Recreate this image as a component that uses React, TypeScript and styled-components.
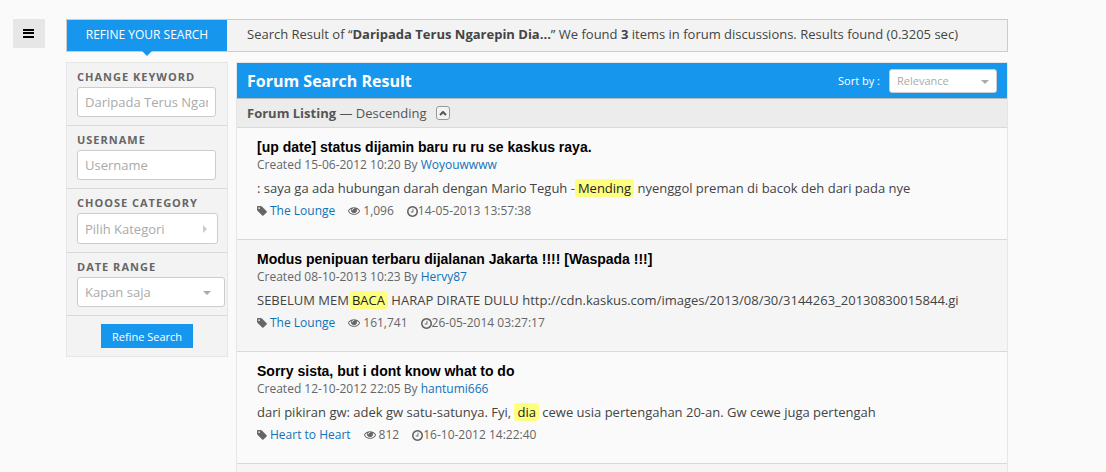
import React from 'react';
import styled, { createGlobalStyle, css } from 'styled-components';

const sans = '"Open Sans", "Noto Sans", sans-serif';
const blue = '#1796ee';
const line = '#d9d9d9';

const GlobalStyle = createGlobalStyle`
  *, *::before, *::after { box-sizing: border-box; }
  body {
    margin: 0;
    background: #fafafa;
    color: #444;
    font: 13px/18px ${sans};
  }
  button, input, select { font-family: inherit; }
`;

const Page = styled.div`
  display: flex;
  align-items: flex-start;
  gap: 21px;
  padding: 19px 98px 0 13px;
`;

const MenuButton = styled.button`
  flex: none;
  display: flex;
  align-items: center;
  justify-content: center;
  width: 32px;
  height: 29px;
  padding: 0;
  border: 0;
  background: #e6e6e6;
  color: #000;
  cursor: pointer;
`;

const Content = styled.div`
  flex: 1;
  min-width: 0;
`;

const SummaryBar = styled.div`
  display: flex;
  min-height: 33px;
  border: 1px solid #ccc;
  background: #f3f3f3;
`;

const RefineTab = styled.h2`
  position: relative;
  flex: none;
  width: 160px;
  margin: 0;
  background: ${blue};
  color: #fff;
  font-size: 12px;
  font-weight: 400;
  line-height: 30px;
  text-align: center;
  text-transform: uppercase;

  &::after {
    content: '';
    position: absolute;
    top: 100%;
    left: 50%;
    margin-left: -5px;
    border: 5px solid transparent;
    border-top-color: ${blue};
    border-bottom: 0;
  }
`;

const SummaryText = styled.p`
  margin: 0;
  padding: 5px 20px;
`;

const Columns = styled.div`
  display: flex;
  align-items: flex-start;
  gap: 8px;
  margin-top: 10px;
`;

const Sidebar = styled.form`
  flex: none;
  width: 162px;
  border: 1px solid #e6e6e6;
  background: #f3f3f3;
`;

const Field = styled.div`
  display: flex;
  flex-direction: column;
  align-items: flex-start;
  gap: 2px;
  padding: 6px 0 8px 10px;
  border-bottom: 1px solid ${line};
`;

const FieldLabel = styled.label`
  color: #666;
  font-size: 11px;
  font-weight: 700;
  line-height: 16px;
  letter-spacing: 1px;
  text-transform: uppercase;
`;

const control = css`
  border: 1px solid #ccc;
  border-radius: 3px;
  background: #fff;
  color: #aaa;
  font-size: 13px;
  padding: 0 7px;
`;

const TextInput = styled.input`
  ${control}
  width: 139px;
  height: 30px;
  &::placeholder { color: #aaa; opacity: 1; }
`;

const MenuTrigger = styled.button`
  ${control}
  display: flex;
  align-items: center;
  justify-content: space-between;
  width: 141px;
  height: 31px;
  padding-right: 10px;
  cursor: pointer;
`;

const SelectBox = styled.div<{ $compact?: boolean }>`
  position: relative;
  width: ${(p) => (p.$compact ? 108 : 148)}px;

  svg {
    position: absolute;
    top: 50%;
    right: ${(p) => (p.$compact ? 8 : 14)}px;
    margin-top: -1px;
    pointer-events: none;
  }
`;

const Select = styled.select<{ $compact?: boolean }>`
  ${control}
  display: block;
  appearance: none;
  width: 100%;
  height: ${(p) => (p.$compact ? 24 : 30)}px;
  font-size: ${(p) => (p.$compact ? 11 : 13)}px;
`;

const SidebarFooter = styled.div`
  display: flex;
  justify-content: center;
  padding: 8px 0;
`;

const SubmitButton = styled.button`
  width: 92px;
  height: 24px;
  padding: 0;
  border: 0;
  background: ${blue};
  color: #fff;
  font-size: 11px;
  cursor: pointer;
`;

const Results = styled.main`
  flex: 1;
  min-width: 0;
  border: 1px solid #e6e6e6;
`;

const ResultsHeader = styled.header`
  display: flex;
  align-items: center;
  justify-content: space-between;
  min-height: 36px;
  padding: 0 10px;
  border-bottom: 1px solid #bbb;
  background: ${blue};
  color: #fff;
`;

const ResultsTitle = styled.h1`
  margin: 0;
  font-size: 16px;
  line-height: 22px;
`;

const SortControl = styled.div`
  display: flex;
  align-items: center;
  gap: 9px;
  font-size: 11px;
`;

const ListingBar = styled.div`
  display: flex;
  align-items: center;
  gap: 9px;
  min-height: 29px;
  padding: 0 10px;
  border-bottom: 1px solid ${line};
  background: #ececec;
  color: #555;
`;

const CollapseButton = styled.button`
  display: flex;
  align-items: center;
  justify-content: center;
  width: 14px;
  height: 14px;
  padding: 0;
  border: 1px solid #999;
  border-radius: 3px;
  background: #f3f3f3;
  color: #555;
  cursor: pointer;
`;

const ResultList = styled.ol`
  margin: 0;
  padding: 0 0 12px;
  background: #f5f5f5;
  list-style: none;
`;

const ResultItem = styled.li`
  min-height: 112px;
  padding: 10px 20px;
  border-bottom: 1px solid ${line};
  background: #fafafa;
  &:nth-child(even) { background: #f5f5f5; }
`;

const ItemTitle = styled.h3`
  margin: 0;
  font: 700 14px/18px "Liberation Sans", Arial, sans-serif;
  a { color: #000; }
`;

const Link = styled.a`
  color: #1172b8;
  text-decoration: none;
`;

const Byline = styled.p`
  margin: 0;
  color: #666;
  font-size: 12px;
`;

const Snippet = styled.p`
  margin: 4px 0;
  line-height: 20px;
`;

const Highlight = styled.mark`
  padding: 0 3px;
  border-radius: 3px;
  background: #ffff7f;
  color: #222;
`;

const Meta = styled.div`
  display: flex;
  gap: 13px;
  color: #666;
  font-size: 12px;
`;

const MetaEntry = styled.span<{ $gap?: number }>`
  display: flex;
  align-items: center;
  gap: ${(p) => p.$gap ?? 3}px;
`;

const iconPaths = {
  tag: 'M576 448q0-53-37.5-90.5t-90.5-37.5-90.5 37.5-37.5 90.5 37.5 90.5 90.5 37.5 90.5-37.5 37.5-90.5zm1067 576q0 53-37 90l-491 492q-39 37-91 37-53 0-90-37l-715-716q-38-37-64.5-101t-26.5-117v-416q0-52 38-90t90-38h416q53 0 117 26.5t102 64.5l715 714q37 39 37 91z',
  eye: 'M1664 960q-152-236-381-353 61 104 61 225 0 185-131.5 316.5t-316.5 131.5-316.5-131.5-131.5-316.5q0-121 61-225-229 117-381 353 133 205 333.5 326.5t434.5 121.5 434.5-121.5 333.5-326.5zm-720-384q0-20-14-34t-34-14q-125 0-214.5 89.5t-89.5 214.5q0 20 14 34t34 14 34-14 14-34q0-86 61-147t147-61q20 0 34-14t14-34zm848 384q0 34-20 69-140 230-376.5 368.5t-499.5 138.5-499.5-139-376.5-368q-20-35-20-69t20-69q140-229 376.5-368t499.5-139 499.5 139 376.5 368q20 35 20 69z',
  clock: 'M1024 544v448q0 14-9 23t-23 9h-320q-14 0-23-9t-9-23v-64q0-14 9-23t23-9h224v-352q0-14 9-23t23-9h64q14 0 23 9t9 23zm416 352q0-148-73-273t-198-198-273-73-273 73-198 198-73 273 73 273 198 198 273 73 273-73 198-198 73-273zm224 0q0 209-103 385.5t-279.5 279.5-385.5 103-385.5-103-279.5-279.5-103-385.5 103-385.5 279.5-279.5 385.5-103 385.5 103 279.5 279.5 103 385.5z',
};

const iconBoxes = {
  tag: { width: 10, height: 10, viewBox: '128 128 1536 1536' },
  eye: { width: 12, height: 10, viewBox: '0 256 1792 1408' },
  clock: { width: 11, height: 11, viewBox: '128 128 1536 1536' },
};

function Icon({ name }: { name: keyof typeof iconPaths }) {
  return (
    <svg {...iconBoxes[name]} fill="currentColor" aria-hidden="true">
      <path d={iconPaths[name]} />
    </svg>
  );
}

function DownArrow() {
  return (
    <svg width="8" height="4" viewBox="0 0 8 4" aria-hidden="true">
      <path d="M0 0h8L4 4z" fill="#aaa" />
    </svg>
  );
}

interface Result {
  title: string;
  created: string;
  author: string;
  before: string;
  match: string;
  after: string;
  forum: string;
  views: string;
  date: string;
}

const results: Result[] = [
  {
    title: '[up date] status dijamin baru ru ru se kaskus raya.',
    created: '15-06-2012 10:20',
    author: 'Woyouwwww',
    before: ': saya ga ada hubungan darah dengan Mario Teguh -',
    match: 'Mending',
    after: ' nyenggol preman di bacok deh dari pada nye',
    forum: 'The Lounge',
    views: '1,096',
    date: '14-05-2013 13:57:38',
  },
  {
    title: 'Modus penipuan terbaru dijalanan Jakarta !!!! [Waspada !!!]',
    created: '08-10-2013 10:23',
    author: 'Hervy87',
    before: 'SEBELUM MEM',
    match: 'BACA',
    after: ' HARAP DIRATE DULU http://cdn.kaskus.com/images/2013/08/30/3144263_20130830015844.gi',
    forum: 'The Lounge',
    views: '161,741',
    date: '26-05-2014 03:27:17',
  },
  {
    title: 'Sorry sista, but i dont know what to do',
    created: '12-10-2012 22:05',
    author: 'hantumi666',
    before: 'dari pikiran gw: adek gw satu-satunya. Fyi, ',
    match: 'dia',
    after: ' cewe usia pertengahan 20-an. Gw cewe juga pertengah',
    forum: 'Heart to Heart',
    views: '812',
    date: '16-10-2012 14:22:40',
  },
];

export default function App() {
  return (
    <>
      <GlobalStyle />
      <Page>
        <MenuButton type="button" aria-label="Menu">
          <svg width="12" height="9" viewBox="0 0 12 9" fill="currentColor" aria-hidden="true">
            <path d="M0 0h11v2H0zM0 3h11v2H0zM0 7h11v2H0z" />
          </svg>
        </MenuButton>
        <Content>
          <SummaryBar>
            <RefineTab>Refine your search</RefineTab>
            <SummaryText>
              Search Result of “<strong>Daripada Terus Ngarepin Dia...</strong>” We found{' '}
              <strong>3</strong> items in forum discussions. Results found (0.3205 sec)
            </SummaryText>
          </SummaryBar>
          <Columns>
            <Sidebar onSubmit={(e) => e.preventDefault()}>
              <Field>
                <FieldLabel htmlFor="keyword">Change keyword</FieldLabel>
                <TextInput id="keyword" type="text" defaultValue="Daripada Terus Ngarepin Dia" />
              </Field>
              <Field>
                <FieldLabel htmlFor="username">Username</FieldLabel>
                <TextInput id="username" type="text" placeholder="Username" />
              </Field>
              <Field>
                <FieldLabel htmlFor="category">Choose category</FieldLabel>
                <MenuTrigger id="category" type="button" aria-haspopup="menu">
                  Pilih Kategori
                  <svg width="4" height="8" viewBox="0 0 4 8" aria-hidden="true">
                    <path d="M0 0v8l4-4z" fill="#ccc" />
                  </svg>
                </MenuTrigger>
              </Field>
              <Field>
                <FieldLabel htmlFor="range">Date range</FieldLabel>
                <SelectBox>
                  <Select id="range">
                    <option>Kapan saja</option>
                  </Select>
                  <DownArrow />
                </SelectBox>
              </Field>
              <SidebarFooter>
                <SubmitButton type="submit">Refine Search</SubmitButton>
              </SidebarFooter>
            </Sidebar>
            <Results>
              <ResultsHeader>
                <ResultsTitle>Forum Search Result</ResultsTitle>
                <SortControl>
                  <label htmlFor="sort">Sort by :</label>
                  <SelectBox $compact>
                    <Select id="sort" $compact>
                      <option>Relevance</option>
                    </Select>
                    <DownArrow />
                  </SelectBox>
                </SortControl>
              </ResultsHeader>
              <ListingBar>
                <span>
                  <strong>Forum Listing</strong> — Descending
                </span>
                <CollapseButton type="button" aria-label="Sort ascending">
                  <svg width="8" height="5" viewBox="0 0 8 5" aria-hidden="true">
                    <path d="M1 4l3-3 3 3" fill="none" stroke="currentColor" strokeWidth="2" />
                  </svg>
                </CollapseButton>
              </ListingBar>
              <ResultList>
                {results.map((r) => (
                  <ResultItem key={r.title}>
                    <ItemTitle>
                      <Link href="#">{r.title}</Link>
                    </ItemTitle>
                    <Byline>
                      Created {r.created} By <Link href="#">{r.author}</Link>
                    </Byline>
                    <Snippet>
                      {r.before}
                      <Highlight>{r.match}</Highlight>
                      {r.after}
                    </Snippet>
                    <Meta>
                      <MetaEntry>
                        <Icon name="tag" />
                        <Link href="#">{r.forum}</Link>
                      </MetaEntry>
                      <MetaEntry>
                        <Icon name="eye" />
                        {r.views}
                      </MetaEntry>
                      <MetaEntry $gap={0}>
                        <Icon name="clock" />
                        {r.date}
                      </MetaEntry>
                    </Meta>
                  </ResultItem>
                ))}
              </ResultList>
            </Results>
          </Columns>
        </Content>
      </Page>
    </>
  );
}
